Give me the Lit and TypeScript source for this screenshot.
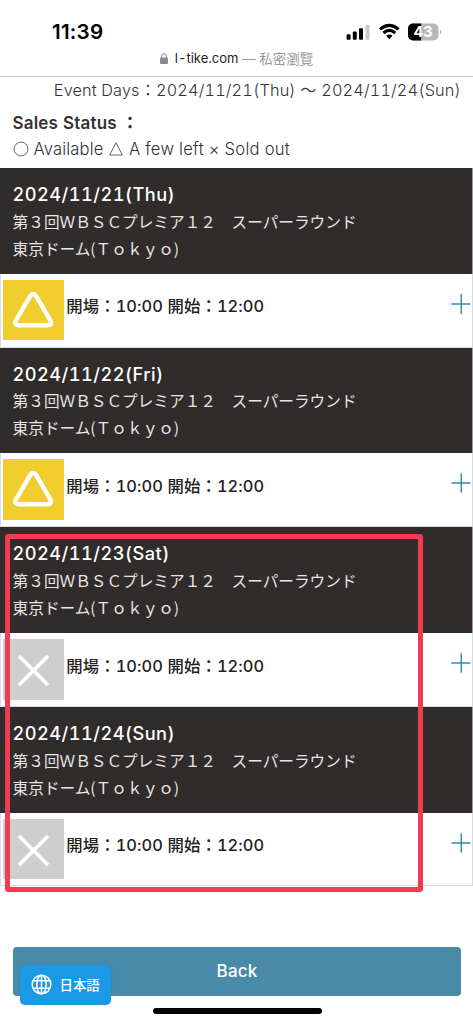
import { LitElement, html, css, svg } from "lit";
import { customElement, property } from "lit/decorators.js";

type Status = "few" | "sold";

@customElement("event-block")
class EventBlock extends LitElement {
  @property() date = "";
  @property() status: Status = "few";

  static styles = css`
    :host { display: block; height: 179.6px; box-sizing: border-box; }
    .head { box-sizing: border-box; height: 105.8px; padding: 13.3px 12.6px 0; background: #302c2c; color: #f4f2f0; line-height: 27px; border-right: 1px solid #9a9a9a; }
    .date { font-size: 18.2px; font-weight: 550; color: #fff; letter-spacing: 0.46px; }
    .line { font-size: 15.65px; white-space: pre; font-weight: 400; color: #e8e6e4; font-family: "Noto Sans CJK JP", sans-serif; position: relative; top: -0.5px; }
    .row { box-sizing: border-box; height: 73.8px; display: flex; border: 1px solid #d5dcdf; border-top: 0; padding: 6px 1px 0 2px; }
    .tile { width: 60.6px; height: 60.6px; flex: none; }
    .few { background: #f1ce2e; }
    .sold { background: #cecece; }
    .time { flex: 1; margin-left: 2.6px; margin-top: 13.6px; line-height: 27px; font-size: 16.4px; font-weight: 500; letter-spacing: 0.09px; color: #222; white-space: pre; }
    .plus { width: 20px; height: 20px; margin-top: 14px; }
    svg { display: block; }
  `;

  render() {
    const glyph = this.status === "few"
      ? svg`<path d="M33.2 16.2 L47 39.8 Q50 45.2 44.5 45.2 H16 Q10.3 45.2 13.3 39.8 L27.2 16.2 Q30.2 11.8 33.2 16.2Z" fill="none" stroke="#fff" stroke-width="4.4" stroke-linejoin="round"/>`
      : svg`<path d="M16 17 L45 46 M45 17 L16 46" stroke="#fff" stroke-width="3.8" />`;
    return html`
      <div class="head">
        <div class="date">${this.date}</div>
        <div class="line">第３回ＷＢＳＣプレミア１２　スーパーラウンド</div>
        <div class="line">東京ドーム(Ｔｏｋｙｏ)</div>
      </div>
      <div class="row">
        <svg class="tile ${this.status}" viewBox="0 0 60.6 60.6">${glyph}</svg>
        <div class="time">開場：10:00 開始：12:00</div>
        <svg class="plus" viewBox="0 0 20 20"><path d="M0.3 10H19.5M10.3 0.3V19.7" stroke="#338db0" stroke-width="1.5"/></svg>
      </div>`;
  }
}

@customElement("app-root")
class AppRoot extends LitElement {
  static styles = css`
    :host { display: block; position: relative; width: 473px; height: 1024px; overflow: hidden; background: #fff; color: #333; font-family: Inter, "Noto Sans CJK JP", sans-serif; font-feature-settings: "tnum" 1; }
    svg { display: block; }
    .top { box-sizing: border-box; height: 77px; border-bottom: 1px solid #c9c9c9; padding-top: 20px; }
    .bar { display: flex; align-items: center; height: 23px; padding: 0 31px 0 52px; }
    .clock { flex: 1; font-size: 20.6px; font-weight: 600; color: #000; letter-spacing: 0.2px; font-feature-settings: "tnum" 0; }
    .sig { width: 96px; height: 20px; }
    .url { display: flex; justify-content: center; align-items: center; height: 18px; margin-top: 6px; font-size: 13px; color: #222; white-space: pre; }
    .lock { width: 8px; height: 11px; margin-right: 7px; }
    .private { color: #999; font-size: 13.5px; font-family: Inter, "Noto Sans CJK TC", sans-serif; }
    .days { height: 27px; line-height: 26px; text-align: right; padding-right: 12px; font-size: 16.3px; font-weight: 350; letter-spacing: 0.13px; white-space: pre; }
    .label { height: 27px; line-height: 26px; margin-top: 5.5px; padding-left: 12.5px; font-size: 17px; font-weight: 570; letter-spacing: 0.2px; white-space: pre; }
    .legend { height: 27px; line-height: 27px; padding-left: 12.5px; font-size: 16.6px; font-weight: 350; letter-spacing: 0.15px; white-space: pre; margin-bottom: 4.5px; display: flex; align-items: center; position: relative; top: -1px; }
    .mark { width: 16px; height: 16px; margin-right: 5px; }
    .tri { margin-left: 4.5px; }
    .few-left { letter-spacing: 0.3px; }
    .back { display: flex; align-items: center; justify-content: center; height: 48.6px; margin: 60.8px 11.6px 0 12.6px; border-radius: 4px; background: #4a8aa9; color: #fff; font-size: 17px; font-weight: 500; letter-spacing: 0.2px; }
    .box { position: absolute; box-sizing: border-box; left: 4.7px; top: 533.7px; width: 418.3px; height: 358px; border: 5px solid #f23b52; border-radius: 3px; }
    .lang { position: absolute; box-sizing: border-box; left: 20px; top: 964.5px; width: 90.5px; height: 40px; border-radius: 5px; background: #1b98e6; color: #fff; display: flex; align-items: center; padding-left: 11px; gap: 7.5px; font-size: 13.4px; line-height: 36px; font-weight: 500; box-shadow: 0 0 2px rgba(0, 80, 130, 0.25); }
    .globe { width: 21px; height: 21px; }
    .home { position: absolute; left: 153px; top: 1008px; width: 168.5px; height: 6px; border-radius: 3px; background: #000; }
  `;

  render() {
    return html`
      <div class="top">
        <div class="bar">
          <div class="clock">11:39</div>
          <svg class="sig" viewBox="0 0 96 20">
            <rect x="0.6" y="12.3" width="4" height="5.5" rx="1"/><rect x="6.8" y="9.6" width="4" height="8.2" rx="1"/><rect x="13" y="6.2" width="4" height="11.6" rx="1"/><rect x="19.5" y="3" width="4" height="14.8" rx="1" fill="#c9c9c9"/>
            <g fill="none" stroke="#000" stroke-width="3"><path d="M34 7.4 Q43.3 -0.6 52.6 7.4"/><path d="M37.4 11 Q43.3 5.8 49.2 11"/></g><path d="M40.2 13.8 Q43.3 11.4 46.4 13.8 L43.3 17.3Z"/>
            <path d="M67 1.5 h20.5 a5 5 0 0 1 5 5 v7 a5 5 0 0 1 -5 5 H67 a5 5 0 0 1 -5 -5 V6.5 a5 5 0 0 1 5 -5z" fill="#b8b8b8"/>
            <path d="M67 1.5 h8.2 v17 H67 a5 5 0 0 1 -5 -5 V6.5 a5 5 0 0 1 5 -5z"/>
            <path d="M94 7.5 q2.2 2.5 0 5z" fill="#aaa"/>
            <text x="77.2" y="15.1" text-anchor="middle" font-size="14.5" font-weight="700" fill="#fff">43</text>
          </svg>
        </div>
        <div class="url"><svg class="lock" viewBox="0 0 8 11"><rect y="4.6" width="8" height="6.4" rx="1" fill="#8a8a8a"/><path d="M1.7 5V3a2.3 2.3 0 0 1 4.6 0v2" fill="none" stroke="#8a8a8a"/></svg>l-tike.com<span class="private"> — 私密瀏覽</span></div>
      </div>
      <div class="days">Event Days：2024/11/21(Thu) ～ 2024/11/24(Sun)</div>
      <div class="label">Sales Status ：</div>
      <div class="legend"><svg class="mark" viewBox="0 0 16 16"><circle cx="8" cy="8" r="6.9" fill="none" stroke="#555" stroke-width=".9"/></svg>Available<svg class="mark tri" viewBox="0 0 16 16"><path d="M1.6 14 8 1.8 14.4 14Z" fill="none" stroke="#555" stroke-width=".9"/></svg><span class="few-left">A few left × Sold out</span></div>
      <event-block date="2024/11/21(Thu)" status="few"></event-block>
      <event-block date="2024/11/22(Fri)" status="few"></event-block>
      <event-block date="2024/11/23(Sat)" status="sold"></event-block>
      <event-block date="2024/11/24(Sun)" status="sold"></event-block>
      <div class="back">Back</div>
      <div class="box"></div>
      <div class="lang"><svg class="globe" viewBox="0 0 21 21" fill="none" stroke="#fff" stroke-width="1.6"><circle cx="10.5" cy="10.5" r="9.3"/><ellipse cx="10.5" cy="10.5" rx="4.7" ry="9.3"/><path d="M10.5 1.2V19.8M2.4 6.8H18.6M2.4 14.2H18.6"/></svg>日本語</div>
      <div class="home"></div>`;
  }
}
